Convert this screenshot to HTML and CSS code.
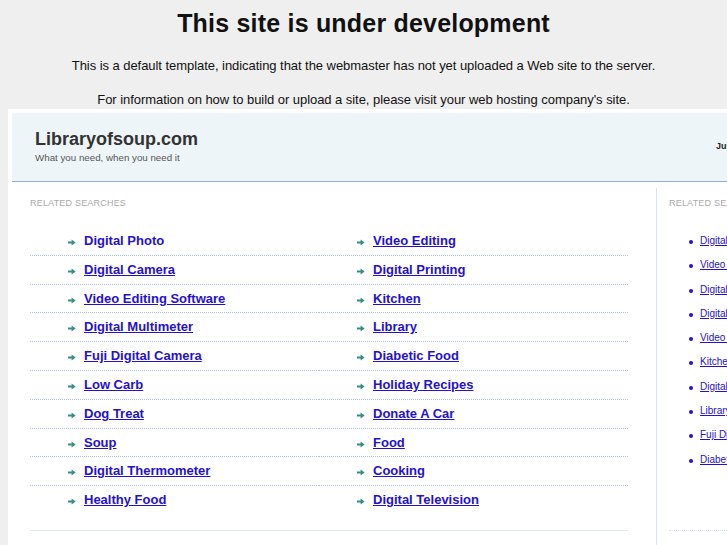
FILE: index.html
```html
<!DOCTYPE html>
<html lang="en">
<head>
    <meta charset="UTF-8">
    <title>Libraryofsoup.com</title>
    <link rel="stylesheet" href="styles.css">
</head>
<body>
    <h1>This site is under development</h1>
    <p class="note">This is a default template, indicating that the webmaster has not yet uploaded a Web site to the server.</p>
    <p class="note">For information on how to build or upload a site, please visit your web hosting company's site.</p>

    <div class="frame">
        <div class="header">
            <div>
                <div class="logo">Libraryofsoup.com</div>
                <div class="tagline">What you need, when you need it</div>
            </div>
            <div class="date">June 12, 2011</div>
        </div>
        <div class="main">
            <div class="left">
                <div class="label">Related Searches</div>
                <ul class="links">
                    <li><a class="first" href="#">Digital Photo</a></li>
                    <li><a href="#">Video Editing</a></li>
                    <li><a href="#">Digital Camera</a></li>
                    <li><a href="#">Digital Printing</a></li>
                    <li><a href="#">Video Editing Software</a></li>
                    <li><a href="#">Kitchen</a></li>
                    <li><a href="#">Digital Multimeter</a></li>
                    <li><a href="#">Library</a></li>
                    <li><a href="#">Fuji Digital Camera</a></li>
                    <li><a href="#">Diabetic Food</a></li>
                    <li><a href="#">Low Carb</a></li>
                    <li><a href="#">Holiday Recipes</a></li>
                    <li><a href="#">Dog Treat</a></li>
                    <li><a href="#">Donate A Car</a></li>
                    <li><a href="#">Soup</a></li>
                    <li><a href="#">Food</a></li>
                    <li><a href="#">Digital Thermometer</a></li>
                    <li><a href="#">Cooking</a></li>
                    <li><a href="#">Healthy Food</a></li>
                    <li><a href="#">Digital Television</a></li>
                </ul>
                <div class="bottom-line"></div>
            </div>
            <div class="right">
                <div class="label">Related Searches</div>
                <ul class="side">
                    <li><a href="#">Digital Photo</a></li>
                    <li><a href="#">Video Editing</a></li>
                    <li><a href="#">Digital Camera</a></li>
                    <li><a href="#">Digital Printing</a></li>
                    <li><a href="#">Video Editing Software</a></li>
                    <li><a href="#">Kitchen</a></li>
                    <li><a href="#">Digital Multimeter</a></li>
                    <li><a href="#">Library</a></li>
                    <li><a href="#">Fuji Digital Camera</a></li>
                    <li><a href="#">Diabetic Food</a></li>
                </ul>
                <div class="side-line"></div>
            </div>
        </div>
    </div>
</body>
</html>
```

FILE: styles.css
```css
html, body {
    overflow: hidden;
}
body {
    margin: 0;
    background-color: #efefef;
    font-family: "Liberation Sans", Arial, sans-serif;
    color: #111;
}
h1 {
    margin: 9px 0 0;
    font-size: 25px;
    line-height: 28px;
    letter-spacing: 0.2px;
    text-align: center;
}
.note {
    margin: 21px 0 0;
    font-size: 13px;
    line-height: 15px;
    letter-spacing: -0.05px;
    text-align: center;
}
.note + .note {
    margin-top: 19px;
}
.frame {
    margin: 2px 0 0 8px;
    width: 1000px;
    padding: 4px;
    background: #fff;
}
.header {
    display: grid;
    grid-template-columns: 681px 1fr;
    align-items: start;
    height: 68px;
    padding-left: 23px;
    background: #eef5f8;
    border-bottom: 1px solid #8eaee2;
}
.logo {
    margin-top: 15px;
    font-size: 18px;
    line-height: 22px;
    font-weight: bold;
    color: #333;
}
.tagline {
    margin-top: 2px;
    font-size: 9.75px;
    line-height: 12px;
    color: #555;
}
.date {
    margin-top: 27px;
    font-size: 9px;
    line-height: 12px;
    font-weight: bold;
    color: #222;
    white-space: nowrap;
}
.main {
    display: flex;
}
.left {
    width: 598px;
    padding: 0 28px 0 18px;
}
.label {
    font-size: 9px;
    line-height: 11px;
    color: #aaa;
    text-transform: uppercase;
    letter-spacing: 0.2px;
}
.left .label {
    margin-top: 16px;
}
.links {
    display: grid;
    grid-template-columns: 289px 309px;
    margin: 18px 0 0;
    padding: 0;
    list-style: none;
}
.links li {
    padding-left: 38px;
    line-height: 27.8px;
    border-bottom: 1px dotted #a9c3ee;
    font-size: 13px;
    font-weight: bold;
}
.links li:nth-last-child(-n+2) {
    border-bottom: none;
}
.links li::before {
    content: "";
    display: inline-block;
    width: 8px;
    height: 7px;
    margin-right: 8px;
    vertical-align: -1px;
    background: url("data:image/svg+xml;utf8,<svg xmlns='http://www.w3.org/2000/svg' width='8' height='7' viewBox='0 0 8 7'><path d='M0 2.6h3.6V0.4L7.6 3.5 3.6 6.6V4.4H0z' fill='%23358d86'/></svg>") no-repeat;
}
a {
    color: #2511cc;
}
.links a.first {
    text-decoration: none;
}
.bottom-line {
    margin-top: 16px;
    border-top: 1px solid #dbe8f8;
}
.right {
    margin-top: 6px;
    padding: 10px 0 0 12px;
    border-left: 1px solid #d6e4f6;
    height: 360px;
}
.side {
    margin: 20px 0 0;
    padding: 0 0 0 31px;
    list-style: none;
}
.side li {
    position: relative;
    font-size: 10px;
    line-height: 24.3px;
    white-space: nowrap;
}
.side li::before {
    content: "";
    position: absolute;
    left: -11px;
    top: 11px;
    width: 4px;
    height: 4px;
    border-radius: 50%;
    background: #2511cc;
}
.side-line {
    margin-top: 58px;
    border-top: 1px dotted #d5e3f5;
}
```
